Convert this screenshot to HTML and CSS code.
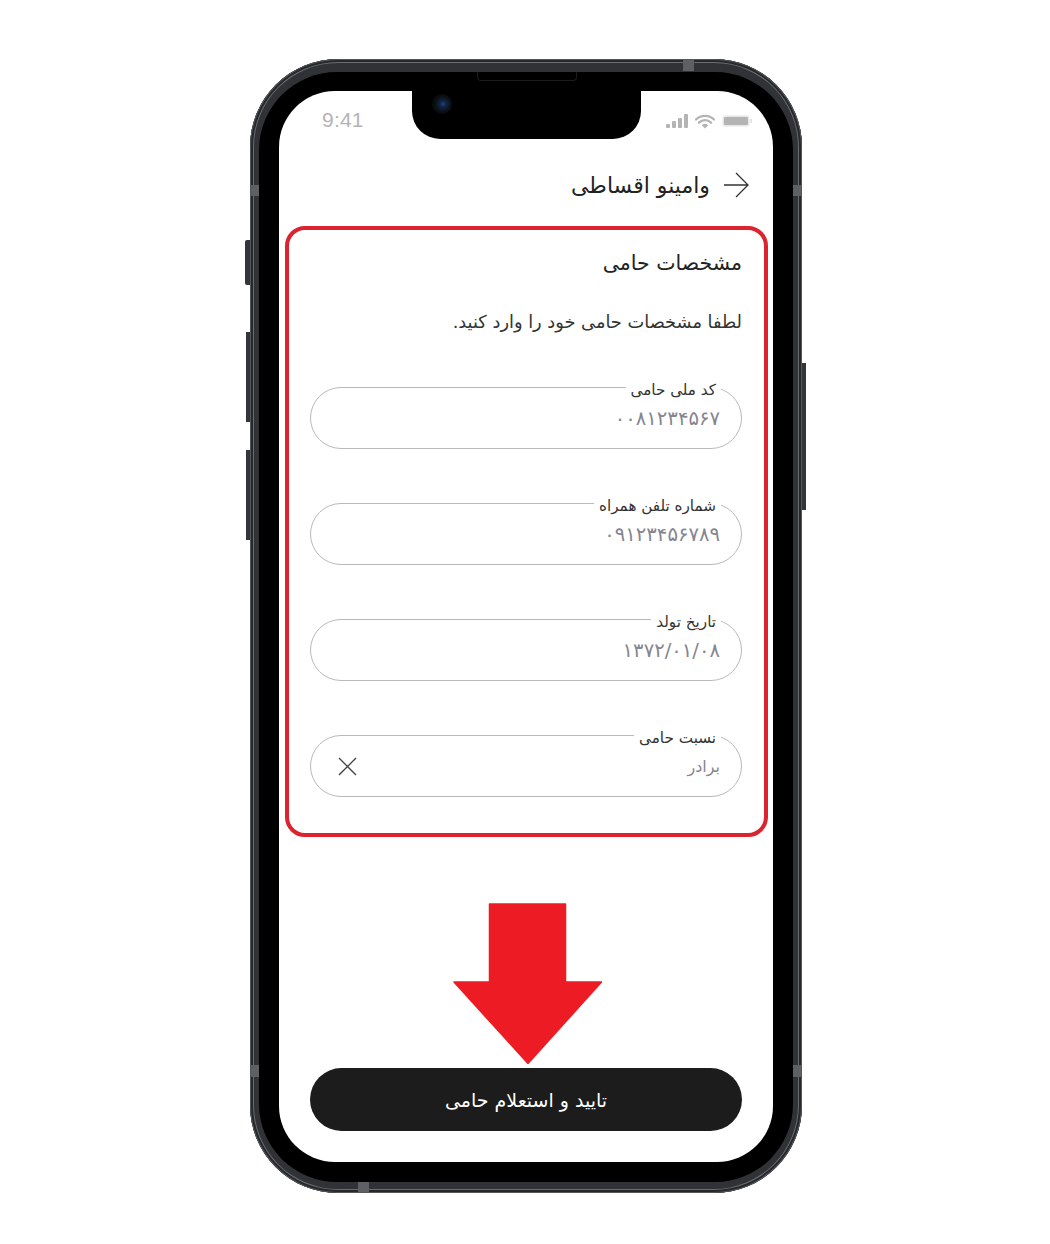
FILE: index.html
```html
<!DOCTYPE html>
<html lang="fa" dir="rtl">
<head>
  <meta charset="utf-8">
  <title>مشخصات حامی</title>
  <link rel="stylesheet" href="styles.css">
</head>
<body>
  <div class="phone">
    <span class="side-btn side-silent"></span>
    <span class="side-btn side-up"></span>
    <span class="side-btn side-down"></span>
    <span class="side-btn side-power"></span>
    <span class="band-mark mark-left-top"></span>
    <span class="band-mark mark-right-top"></span>
    <span class="band-mark mark-left-bottom"></span>
    <span class="band-mark mark-right-bottom"></span>
    <span class="band-mark mark-top"></span>
    <span class="band-mark mark-bottom"></span>
    <div class="bezel">
      <span class="speaker"></span>
      <div class="screen">
        <div class="notch"><span class="camera"></span></div>
        <div class="status-bar" dir="ltr">
          <span class="time">9:41</span>
          <div class="status-icons">
            <svg width="22" height="15" viewBox="0 0 22 15"><rect x="0" y="10" width="4" height="4" rx="1"/><rect x="6" y="7" width="4" height="7" rx="1"/><rect x="12" y="4" width="4" height="10" rx="1"/><rect x="18" y="0" width="4" height="14" rx="1"/></svg>
            <svg width="20" height="15" viewBox="0 0 20 15"><path d="M1 5.500a13 13 0 0 1 18 0M4 8.600a8.600 8.600 0 0 1 12 0" fill="none" stroke="#b4b4b4" stroke-width="2.400" stroke-linecap="round"/><path d="M6.800 11.200a4.400 4.400 0 0 1 6.400 0L10 14.600z"/></svg>
            <svg width="30" height="12" viewBox="0 0 30 12"><rect x="0.500" y="0.500" width="27" height="11" rx="2.500" fill="#e6e6e6"/><rect x="2" y="2" width="24" height="8" rx="1.500"/><rect x="28.500" y="4" width="1.500" height="4" fill="#dddddd"/></svg>
          </div>
        </div>

        <div class="page-header">
          <svg class="back-arrow" width="28" height="26" viewBox="0 0 28 26"><path d="M2 13h24M14 1 26 13 14 25" fill="none" stroke="#333" stroke-width="1.300"/></svg>
          <span class="page-title">وامینو اقساطی</span>
        </div>

        <section class="highlight-box">
          <h2 class="box-title">مشخصات حامی</h2>
          <p class="box-hint">لطفا مشخصات حامی خود را وارد کنید.</p>

          <div class="field">
            <label class="field-label">کد ملی حامی</label>
            <span class="field-value">۰۰۸۱۲۳۴۵۶۷</span>
          </div>
          <div class="field">
            <label class="field-label">شماره تلفن همراه</label>
            <span class="field-value">۰۹۱۲۳۴۵۶۷۸۹</span>
          </div>
          <div class="field">
            <label class="field-label">تاریخ تولد</label>
            <span class="field-value">۱۳۷۲/۰۱/۰۸</span>
          </div>
          <div class="field">
            <label class="field-label">نسبت حامی</label>
            <span class="field-value field-value-text">برادر</span>
            <svg class="clear-icon" width="19" height="19" viewBox="0 0 19 19"><path d="M1 1l17 17M18 1 1 18" fill="none" stroke="#444" stroke-width="1.400"/></svg>
          </div>
        </section>

        <div class="actions">
          <svg class="down-arrow" width="150" height="161" viewBox="0 0 150 161"><path d="M36.500 1h76v78h36L75 160.500 1 79h35.500z" fill="#ed1c24" stroke="#ed1c24" stroke-width="1.500" stroke-linejoin="round"/></svg>
          <button class="confirm-btn">تایید و استعلام حامی</button>
        </div>
      </div>
    </div>
  </div>
</body>
</html>
```

FILE: styles.css
```css
body {
  margin: 0;
  padding: 59px 0 0 2px;
  display: flex;
  justify-content: center;
  background-color: #fff;
  font-family: "DejaVu Sans", sans-serif;
}

.phone {
  position: relative;
  box-sizing: border-box;
  width: 552px;
  height: 1134px;
  padding: 13px 9px 11px;
  border-radius: 88px;
  background-color: #303236;
  box-shadow: inset 0 0 0 1px #55575b, inset 0 0 0 3px #26282b, inset 0 0 0 4px #6a6c70;
}

.side-btn {
  position: absolute;
  width: 5px;
  background-color: #33353a;
}
.side-silent { left: -5px; top: 181px; height: 45px; border-radius: 2px 0 0 2px; }
.side-up { left: -4px; top: 273px; height: 90px; width: 4px; }
.side-down { left: -4px; top: 391px; height: 90px; width: 4px; }
.side-power { right: -4px; top: 304px; height: 147px; width: 4px; }

.band-mark {
  position: absolute;
  background-color: #5e6064;
}
.mark-left-top { left: 1px; top: 126px; width: 8px; height: 11px; }
.mark-right-top { right: 1px; top: 126px; width: 8px; height: 11px; }
.mark-left-bottom { left: 1px; top: 1006px; width: 8px; height: 12px; }
.mark-right-bottom { right: 1px; top: 1006px; width: 8px; height: 12px; }
.mark-top { left: 433px; top: 1px; width: 11px; height: 11px; }
.mark-bottom { left: 108px; bottom: 1px; width: 11px; height: 10px; }

.bezel {
  position: relative;
  height: 100%;
  box-sizing: border-box;
  padding: 19px 20px 20px;
  border-radius: 78px;
  background-color: #000;
}

.speaker {
  position: absolute;
  left: 218px;
  top: 0;
  width: 100px;
  height: 9px;
  border: 1px solid #1c1c1e;
  border-top: none;
  border-radius: 0 0 4px 4px;
  box-sizing: border-box;
}

.screen {
  position: relative;
  display: flex;
  flex-direction: column;
  height: 100%;
  box-sizing: border-box;
  padding: 0 5px 31px 6px;
  border-radius: 56px;
  background-color: #fff;
}

.notch {
  position: absolute;
  left: 133px;
  top: -1px;
  width: 229px;
  height: 49px;
  border-radius: 0 0 28px 28px;
  background-color: #000;
}

.camera {
  position: absolute;
  left: 20px;
  top: 4px;
  width: 20px;
  height: 20px;
  border-radius: 50%;
  background: radial-gradient(circle at 55% 50%, #1c3f8c 0, #12233f 22%, #0b0d12 55%, #060607 100%);
}

.status-bar {
  display: flex;
  justify-content: space-between;
  align-items: center;
  height: 58px;
  padding: 0 16px 0 37px;
}

.time {
  font-family: "Liberation Sans", sans-serif;
  font-size: 21px;
  letter-spacing: 0.2px;
  color: #b4b4b4;
}

.status-icons {
  display: flex;
  align-items: center;
  gap: 7px;
  padding-top: 2px;
  fill: #b4b4b4;
}

.page-header {
  display: flex;
  align-items: center;
  gap: 12px;
  height: 72px;
  padding-right: 18px;
  margin-bottom: 5px;
}

.page-title {
  font-size: 22px;
  color: #222;
}

.highlight-box {
  padding: 15px 22px 36px 21px;
  border: 4px solid #dc2430;
  border-radius: 20px;
}

.box-title {
  margin: 0;
  height: 36px;
  line-height: 36px;
  font-size: 20.500px;
  font-weight: normal;
  color: #222;
}

.box-hint {
  margin: 23px 0 47px;
  height: 36px;
  line-height: 36px;
  font-size: 17.800px;
  color: #333;
}

.field {
  position: relative;
  display: flex;
  align-items: center;
  justify-content: space-between;
  box-sizing: border-box;
  height: 62px;
  margin-bottom: 54px;
  padding: 1px 21px 0 27px;
  border: 1px solid #b9b9b9;
  border-radius: 31px;
}
.field:last-child {
  margin-bottom: 0;
}

.field-label {
  position: absolute;
  right: 20px;
  top: -8px;
  padding: 0 5px;
  background-color: #fff;
  font-size: 15.200px;
  line-height: 20px;
  color: #333;
}

.field-value {
  font-size: 19.600px;
  color: #85858f;
}
.field-value-text {
  font-size: 16px;
}

.clear-icon {
  display: block;
}

.actions {
  margin-top: auto;
  display: flex;
  flex-direction: column;
  align-items: center;
  padding: 0 26px 0 25px;
}

.down-arrow {
  display: block;
  margin: 0 0 4px 3px;
}

.confirm-btn {
  width: 100%;
  height: 63px;
  border: none;
  border-radius: 32px;
  background-color: #1c1c1c;
  color: #fff;
  font-family: inherit;
  font-size: 19px;
}
```
